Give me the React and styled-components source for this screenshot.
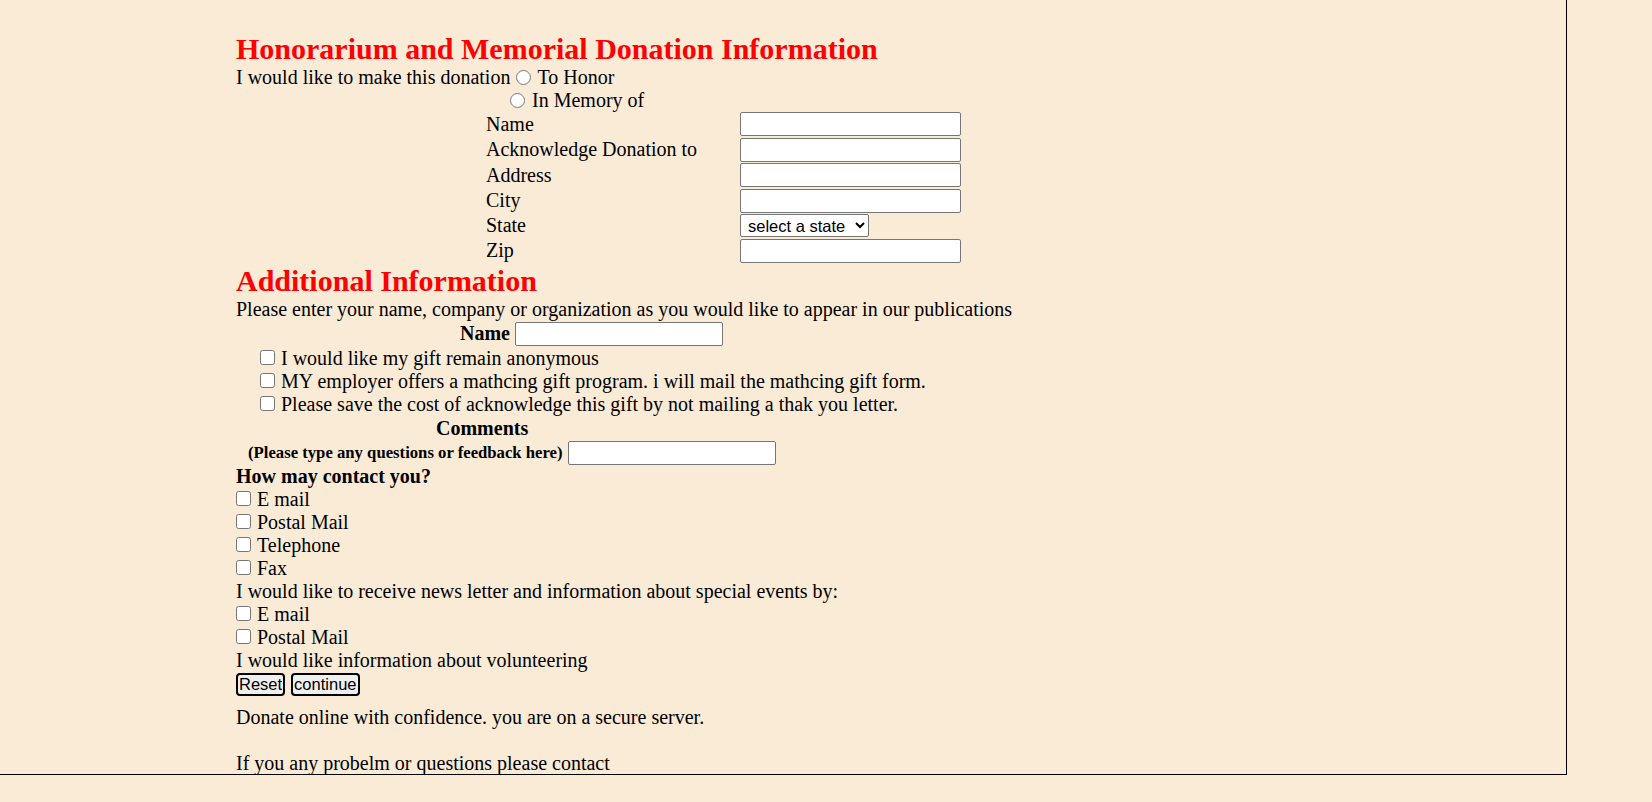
import React from 'react';
import styled, { createGlobalStyle } from 'styled-components';

const FIELDS = ['Name', 'Acknowledge Donation to', 'Address', 'City', 'State', 'Zip'];

const OPTIONS = [
    'I would like my gift remain anonymous',
    'MY employer offers a mathcing gift program. i will mail the mathcing gift form.',
    'Please save the cost of acknowledge this gift by not mailing a thak you letter.'
];

const CONTACT = ['E mail', 'Postal Mail', 'Telephone', 'Fax'];
const NEWS = ['E mail', 'Postal Mail'];

const GlobalStyle = createGlobalStyle`
  html, body {
    margin: 0;
    padding: 0;
    background: #faebd7;
  }
  body {
    font-family: "Liberation Serif", "Times New Roman", serif;
    color: #000;
  }
`;

const Frame = styled.div`
  box-sizing: border-box;
  width: 1567px;
  height: 775px;
  border-right: 1px solid #000;
  border-bottom: 1px solid #000;
  overflow: hidden;
`;

const Content = styled.form`
  padding: 32px 0 0 236px;
  font-size: 20px;
  line-height: 23px;
`;

const Heading = styled.h2`
  margin: ${p => p.$top || 0}px 0 0;
  font-size: 30px;
  line-height: 34px;
  font-weight: bold;
  color: #ff0000;
`;

const Line = styled.div`
  display: flex;
  align-items: center;
  height: ${p => p.$height || 23}px;
  padding-left: ${p => p.$indent || 0}px;
  white-space: nowrap;
`;

const Radio = styled.input.attrs({ type: 'radio' })`
  width: 15px;
  height: 15px;
  margin: 0 ${p => p.$after || 6}px 1px ${p => p.$before || 0}px;
`;

const Check = styled.input.attrs({ type: 'checkbox' })`
  width: 15px;
  height: 15px;
  margin: 0 6px 2px 0;
`;

const FieldGrid = styled.div`
  display: grid;
  grid-template-columns: 254px auto;
  row-gap: 1.6px;
  margin-left: 250px;
  align-items: center;
`;

const FieldLabel = styled.span`
  white-space: nowrap;
`;

const TextBox = styled.input.attrs({ type: 'text' })`
  box-sizing: border-box;
  width: ${p => p.$width}px;
  height: 24px;
  margin: 0;
  padding: 1px 2px;
  border: 1px solid #767676;
  border-radius: 2px;
  background: #fff;
  font-family: "Liberation Sans", Arial, sans-serif;
  font-size: 16px;
`;

const StateSelect = styled.select`
  box-sizing: border-box;
  justify-self: start;
  width: 129px;
  height: 23px;
  margin: 0;
  padding: 0 0 0 3px;
  border: 1px solid #767676;
  border-radius: 2px;
  background: #fff;
  color: #000;
  font-family: "Liberation Sans", Arial, sans-serif;
  font-size: 16.5px;
`;

const Bold = styled.span`
  font-weight: bold;
  font-size: ${p => p.$size || 20}px;
  margin-right: ${p => p.$gap || 0}px;
`;

const ButtonRow = styled.div`
  display: flex;
  gap: 6px;
  height: 23px;
  margin-top: 1px;
`;

const Button = styled.button`
  box-sizing: border-box;
  height: 23px;
  padding: 0 1px;
  border: 2px solid #000;
  border-radius: 4px;
  background: #efefef;
  color: #000;
  font-family: "Liberation Sans", Arial, sans-serif;
  font-size: 16.5px;
  line-height: 19px;
`;

const Note = styled.p`
  margin: ${p => p.$gap}px 0 0;
`;

const App = () => {
    return (
        <>
            <GlobalStyle />
            <Frame>
                <Content onSubmit={e => e.preventDefault()}>
                    <Heading>Honorarium and Memorial Donation Information</Heading>
                    <Line>
                        I would like to make this donation
                        <Radio name="kind" $before={6} />
                        To Honor
                    </Line>
                    <Line $indent={274}>
                        <Radio name="kind" $after={7} />
                        In Memory of
                    </Line>
                    <FieldGrid>
                        {FIELDS.map(field => (
                            <React.Fragment key={field}>
                                <FieldLabel>{field}</FieldLabel>
                                {field === 'State'
                                    ? <StateSelect defaultValue=""><option value="">select a state</option></StateSelect>
                                    : <TextBox $width={221} />}
                            </React.Fragment>
                        ))}
                    </FieldGrid>
                    <Heading $top={1}>Additional Information</Heading>
                    <Line>Please enter your name, company or organization as you would like to appear in our publications</Line>
                    <Line $indent={224} $height={26}>
                        <Bold $gap={5}>Name</Bold>
                        <TextBox $width={208} />
                    </Line>
                    {OPTIONS.map(option => (
                        <Line key={option} $indent={24}>
                            <Check />
                            {option}
                        </Line>
                    ))}
                    <Line $indent={200} $height={25}><Bold>Comments</Bold></Line>
                    <Line $indent={12} $height={24}>
                        <Bold $size={16.7} $gap={5}>(Please type any questions or feedback here)</Bold>
                        <TextBox $width={208} />
                    </Line>
                    <Line><Bold>How may contact you?</Bold></Line>
                    {CONTACT.map(item => (
                        <Line key={item}><Check />{item}</Line>
                    ))}
                    <Line>I would like to receive news letter and information about special events by:</Line>
                    {NEWS.map(item => (
                        <Line key={item}><Check />{item}</Line>
                    ))}
                    <Line>I would like information about volunteering</Line>
                    <ButtonRow>
                        <Button type="reset">Reset</Button>
                        <Button type="submit">continue</Button>
                    </ButtonRow>
                    <Note $gap={10}>Donate online with confidence. you are on a secure server.</Note>
                    <Note $gap={23}>If you any probelm or questions please contact</Note>
                </Content>
            </Frame>
        </>
    );
};

export default App;
